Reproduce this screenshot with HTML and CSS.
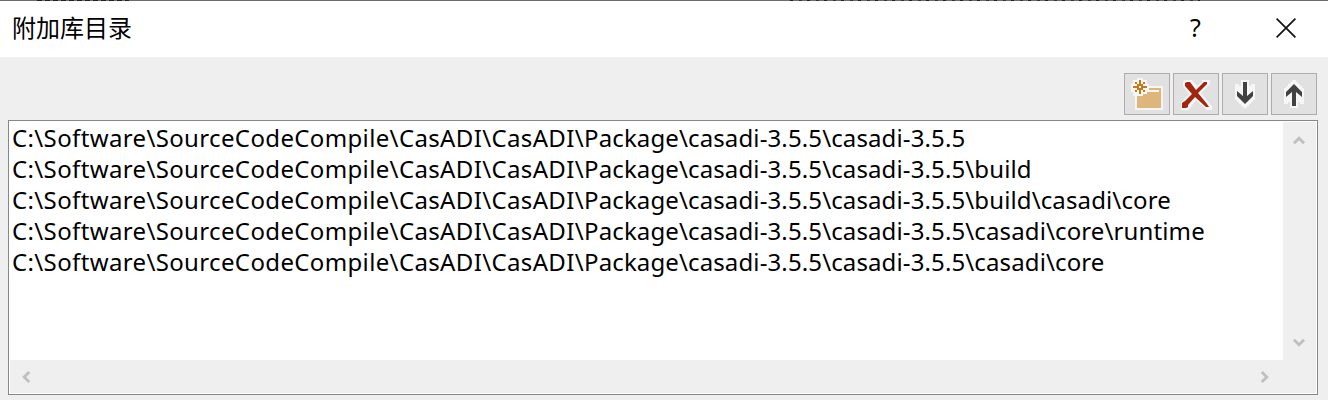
FILE: index.html
```html
<!DOCTYPE html>
<html lang="zh-CN">
<head>
<meta charset="utf-8">
<title>附加库目录</title>
<link rel="stylesheet" href="styles.css">
</head>
<body>
<div class="dialog">
  <header class="titlebar">
    <h1 class="title">附加库目录</h1>
    <span class="help">?</span>
    <svg class="close" width="20" height="20" viewBox="0 0 20 20"><path d="M.6.6 19.4 19.4M19.4.6.6 19.4"/></svg>
  </header>
  <div class="toolbar">
    <button class="tool" aria-label="New">
      <svg width="44" height="40" viewBox="0 0 44 40" shape-rendering="crispEdges">
        <path fill="#f6f6f6" d="M8 6h4V4h6v2h4v4h2v2h14v24H10V22H8v-4H6v-8h2z"/>
        <path fill="#dcb67a" d="M12 22h6v-2h4v-2h2v-4h12v20H12z"/>
        <path fill="#f6f6f6" d="M22 16h12v2H22z"/>
        <path fill="#c27d1a" d="M14 6h2v4h-2zM14 16h2v4h-2zM8 12h4v2H8zM18 12h4v2h-4zM12 10h6v2h-6zM12 14h6v2h-6zM12 10h2v6h-2zM16 10h2v6h-2zM10 8h2v2h-2zM18 8h2v2h-2zM10 16h2v2h-2zM18 16h2v2h-2z"/>
        <path fill="#f6f6f6" d="M14 12h2v2h-2z"/>
      </svg>
    </button>
    <button class="tool" aria-label="Delete">
      <svg width="44" height="40" viewBox="0 0 44 40">
        <path fill="#f6f6f6" d="M11 6h7l5 6 5-4V6h8v4l-9 9 9 11 2 2v4h-5l-11-10-6 8-2 2H7v-8l8-8-6-8V8z"/>
        <path fill="#a1260d" d="M11 9 13 8h3l6 8 8-8h3v2l-9 9 9 11 2 3h-3L21 23l-7 8v2l-2 1H8v-5l3-2 7-7-7-8z"/>
      </svg>
    </button>
    <button class="tool" aria-label="Move down">
      <svg width="44" height="40" viewBox="0 0 44 40">
        <path fill="#f6f6f6" d="M18 6h8v6h2v-2h4v16h-2v2h-2v2h-2v2h-2v2h-4v-2h-2v-2h-2v-2h-2v-2h-2V10h4v2h2z"/>
        <path fill="#424242" d="M20 8h4v14l6-5v5l-6 6-2 2-2-2-6-6v-5l6 5z"/>
      </svg>
    </button>
    <button class="tool" aria-label="Move up">
      <svg width="44" height="40" viewBox="0 0 44 40">
        <path fill="#f6f6f6" d="M18 34h8v-6h2v2h4V14h-2v-2h-2v-2h-2V8h-2V6h-4v2h-2v2h-2v2h-2v2h-2v16h4v-2h2z"/>
        <path fill="#424242" d="M20 32h4V18l6 5v-5l-6-6-2-2-2 2-6 6v5l6-5z"/>
      </svg>
    </button>
  </div>
  <div class="listbox">
    <div class="paths">
      <div class="path"><span class="root">C:\Software\SourceCodeCompile\CasADI\CasADI\</span>Package\casadi-3.5.5\casadi-3.5.5</div>
      <div class="path"><span class="root">C:\Software\SourceCodeCompile\CasADI\CasADI\</span>Package\casadi-3.5.5\casadi-3.5.5\build</div>
      <div class="path"><span class="root">C:\Software\SourceCodeCompile\CasADI\CasADI\</span>Package\casadi-3.5.5\casadi-3.5.5\build\casadi\core</div>
      <div class="path"><span class="root">C:\Software\SourceCodeCompile\CasADI\CasADI\</span>Package\casadi-3.5.5\casadi-3.5.5\casadi\core\runtime</div>
      <div class="path"><span class="root">C:\Software\SourceCodeCompile\CasADI\CasADI\</span>Package\casadi-3.5.5\casadi-3.5.5\casadi\core</div>
    </div>
    <div class="vscroll">
      <svg class="chev" width="12" height="9" viewBox="0 0 12 9"><path d="M1 7.2 6 2.2l5 5"/></svg>
      <svg class="chev" width="12" height="9" viewBox="0 0 12 9"><path d="M1 1.8 6 6.8l5-5"/></svg>
    </div>
    <div class="hscroll">
      <svg class="chev" width="9" height="12" viewBox="0 0 9 12"><path d="M7.2 1 2.2 6l5 5"/></svg>
      <svg class="chev" width="9" height="12" viewBox="0 0 9 12"><path d="M1.8 1 6.8 6l-5 5"/></svg>
    </div>
  </div>
</div>
</body>
</html>
```
FILE: styles.css
```css
* { box-sizing: border-box; }
body { margin: 0; background: #efefef; color: #000; overflow: hidden; font-family: "Noto Sans", "Noto Sans CJK SC", sans-serif; }
.dialog { width: 1328px; height: 400px; display: flex; flex-direction: column; }
.titlebar {
  height: 57px; flex: none; display: flex; align-items: center; padding: 1px 32px 2px 12px;
  background:
    repeating-linear-gradient(90deg, #241e22 0 3px, #6e6b6e 3px 9px, #3b3032 9px 12px, #6e6b6e 12px 17px) 790px 0 / 410px 1px no-repeat,
    repeating-linear-gradient(90deg, #241e22 0 5px, #6e6b6e 5px 8px) 37px 0 / 92px 1px no-repeat,
    linear-gradient(#6e6b6e, #6e6b6e) 0 0 / 100% 1px no-repeat,
    #fff;
}
.title { margin: 0 auto 2px 0; font: 400 24px/32px "Noto Sans CJK SC", sans-serif; }
.help { width: 12px; margin: 0 74px 2px 0; font-size: 25px; line-height: 32px; }
.close { fill: none; stroke: #111; stroke-width: 1.7; }
.toolbar { height: 63px; flex: none; display: flex; justify-content: flex-end; gap: 3px; padding: 16px 11px 0 0; }
.tool { width: 46px; height: 42px; padding: 0; border: 1px solid #adadad; background: #e1e1e1; }
.tool svg { display: block; }
.listbox {
  width: 1310px; height: 275px; margin-left: 8px; padding: 1px; border: 1px solid #828790; background: #fff;
  display: grid; grid-template-columns: 1fr 33px; grid-template-rows: 1fr 33px;
}
.paths { padding-left: 2px; overflow: hidden; }
.path { height: 31px; font-size: 24px; line-height: 31px; letter-spacing: .12px; white-space: nowrap; }
.root { letter-spacing: .36px; }
.vscroll { background: #efefef; display: flex; flex-direction: column; justify-content: space-between; align-items: center; padding: 14px 1px 13px 0; }
.hscroll { grid-column: 1 / -1; background: #efefef; display: flex; justify-content: space-between; align-items: center; padding: 0 47px 0 12px; }
.chev { fill: none; stroke: #bfbfbf; stroke-width: 2.8; }
```
